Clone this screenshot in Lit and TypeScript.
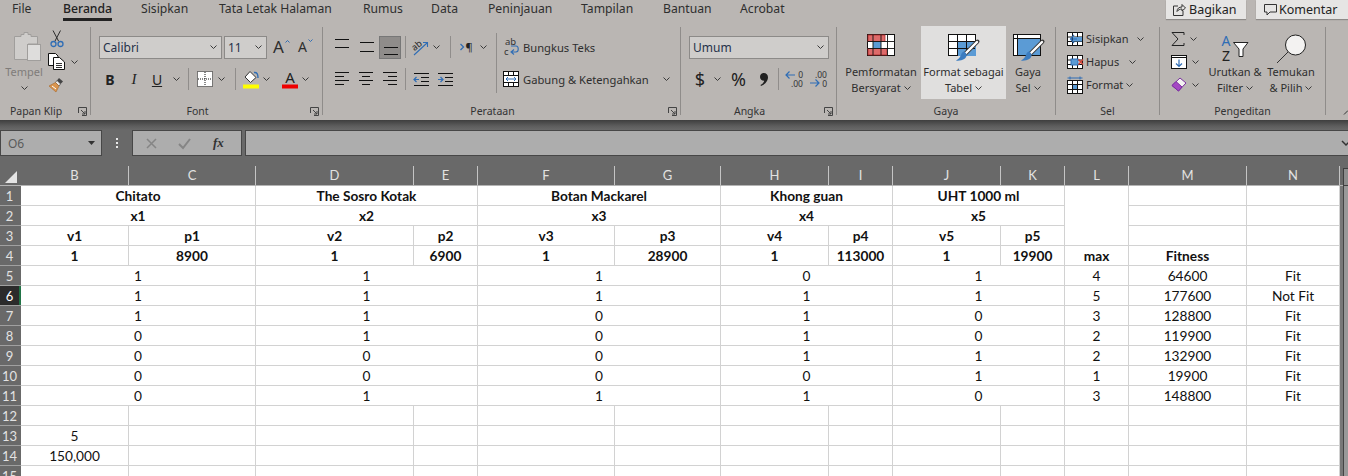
import { LitElement, html, css, svg } from "lit";
import { customElement } from "lit/decorators.js";

const chev = html`<svg class="chev" width="7" height="4" viewBox="0 0 7 4"><path d="M.5.5 3.5 3.5 6.5.5" fill="none" stroke="#3a3a3a" stroke-width="1"/></svg>`;
const launcher = html`<svg class="launcher" width="9" height="9" viewBox="0 0 9 9"><path d="M.5 6V.5H8.500V8.500H4M3 3 7 7M4 7H7V4" fill="none" stroke="#444" stroke-width="1"/></svg>`;

// horizontal line icons for the alignment buttons
const lines = (rows: number[][], w = 15, h = 23) =>
  html`<svg width=${w} height=${h} viewBox="0 0 ${w} ${h}">
    ${rows.map((r) => svg`<path d="M${r[0]} ${r[2] + 0.5}H${r[1]}" stroke="#111" stroke-width="1"/>`)}
  </svg>`;

const LB = "'Noto Sans',sans-serif";

const iconTempel = html`<svg width="28" height="30" viewBox="0 0 28 30">
  <path d="M1.500 5.500H8V3.500H11V1.500H15V3.500H18V5.500H24.500V13H15V28.500H1.500Z" fill="#cfcdcb" stroke="#a09e9c"/>
  <rect x="14.500" y="13.500" width="13" height="16" fill="#dedddc" stroke="#a09e9c"/>
</svg>`;
const iconScissors = html`<svg width="14" height="18" viewBox="0 0 14 18">
  <path d="M3 .5 8.500 11M10.500.5 5 11" fill="none" stroke="#2b2b2b"/>
  <circle cx="3.500" cy="14" r="2.500" fill="none" stroke="#2f6db5" stroke-width="1.300"/>
  <circle cx="10.500" cy="14" r="2.500" fill="none" stroke="#2f6db5" stroke-width="1.300"/>
</svg>`;
const iconCopy = html`<svg width="17" height="17" viewBox="0 0 17 17">
  <path d="M.5.5H7.500L10 3V12.500H.5Z" fill="#fff" stroke="#111"/>
  <path d="M5.500 4.500H11.500L16.500 9V16.500H5.500Z" fill="#fff" stroke="#111"/>
  <path d="M8 10.500H14M8 12.500H14M8 14.500H14" stroke="#333"/>
</svg>`;
const iconBrush = html`<svg width="17" height="16" viewBox="0 0 17 16">
  <path d="M11 1 15 4.500 12.500 7 9 3.500Z" fill="#444"/>
  <path d="M9 3.500 12.500 7 11 9 7.500 5.500Z" fill="#eee" stroke="#333" stroke-width=".6"/>
  <path d="M7.500 5.500 11 9 8 15 1 9Z" fill="#d9954f" stroke="#a8682c" stroke-width=".6"/>
  <path d="M4 9 8 12" stroke="#fff"/>
</svg>`;
const iconBorders = html`<svg width="16" height="16" viewBox="0 0 16 16">
  <rect x=".5" y=".5" width="15" height="15" fill="#fff" stroke="#111" stroke-dasharray="1 1"/>
  <path d="M8 1V15M1 8H15" stroke="#111" stroke-dasharray="1 1"/>
</svg>`;
const iconFill = html`<svg width="17" height="19" viewBox="0 0 17 19">
  <path d="M7 1.500 13 7.500 7.500 12.500 2 7Z" fill="#fff" stroke="#333"/>
  <path d="M11 2.500C14 2 15 4 15 8" fill="none" stroke="#2f6db5" stroke-width="1.400"/>
  <rect y="14.500" width="16" height="4" fill="#ffff00"/>
</svg>`;
const iconFontColor = html`<svg width="17" height="19" viewBox="0 0 17 19">
  <text x="8" y="13" text-anchor="middle" font-size="15" font-family=${LB} fill="#222">A</text>
  <rect y="14.500" width="16" height="4" fill="#f00000"/>
</svg>`;
const iconOrient = html`<svg width="17" height="17" viewBox="0 0 17 17">
  <text x="6" y="9" text-anchor="middle" font-size="9" font-family=${LB} fill="#222" transform="rotate(-40 6 8)">ab</text>
  <path d="M2 16 15 4M11 3.500H15.500V8" fill="none" stroke="#2f6db5" stroke-width="1.100"/>
</svg>`;
const iconIndent = (rev: boolean) => html`<svg width="15" height="13" viewBox="0 0 15 13">
  <path d="M0 .5H15M0 12.500H15M7 4.500H15M7 8.500H15" stroke="#111"/>
  ${rev
    ? svg`<path d="M5 6.500H0M2.500 4 0 6.500 2.500 9" fill="none" stroke="#2f6db5" stroke-width="1.200"/>`
    : svg`<path d="M0 6.500H5M2.500 4 5 6.500 2.500 9" fill="none" stroke="#2f6db5" stroke-width="1.200"/>`}
</svg>`;
const iconRtl = html`<svg width="13" height="12" viewBox="0 0 13 12">
  <path d="M.5 3 3.500 6 .5 9" fill="none" stroke="#2f6db5" stroke-width="1.300"/>
  <text x="9" y="10" text-anchor="middle" font-size="11" font-family=${LB} fill="#222">¶</text>
</svg>`;
const iconWrap = html`<svg width="15" height="20" viewBox="0 0 15 20">
  <text x="1" y="8" font-size="9.500" font-family=${LB} fill="#333">ab</text>
  <text x="0" y="18" font-size="9.500" font-family=${LB} fill="#333">c</text>
  <path d="M8 15H12C15 15 15 9 12 9H7M10 12.500 7 15 10 17.500" fill="none" stroke="#2f6db5" stroke-width="1.100"/>
</svg>`;
const iconMerge = html`<svg width="16" height="16" viewBox="0 0 16 16">
  <rect x=".5" y=".5" width="15" height="15" fill="#fff" stroke="#111"/>
  <path d="M1 4.500H15M1 11.500H15M5.500 1V4M10.500 1V4M5.500 12V15M10.500 12V15" stroke="#111"/>
  <path d="M3 8H13M5 6 3 8 5 10M11 6 13 8 11 10" fill="none" stroke="#2f6db5"/>
</svg>`;
const iconDec = (inc: boolean) => html`<svg width="18" height="18" viewBox="0 0 18 18">
  ${inc
    ? svg`<text x="18" y="8" text-anchor="end" font-size="8.500" font-family=${LB} fill="#333">0</text>
        <text x="18" y="17" text-anchor="end" font-size="8.500" font-family=${LB} fill="#333">.00</text>
        <path d="M10 5H1M4.500 1.500 1 5 4.500 8.500" fill="none" stroke="#2f6db5" stroke-width="1.200"/>`
    : svg`<text x="18" y="8" text-anchor="end" font-size="8.500" font-family=${LB} fill="#333">.00</text>
        <text x="18" y="17" text-anchor="end" font-size="8.500" font-family=${LB} fill="#333">0</text>
        <path d="M1 13H10M6.500 9.500 10 13 6.500 16.500" fill="none" stroke="#2f6db5" stroke-width="1.200"/>`}
</svg>`;
const iconComma = html`<svg width="8" height="13" viewBox="0 0 8 13">
  <path d="M3.800 0C6.300 0 8 1.800 8 4.200 8 8 5 11.500 1 13L.5 12C2.500 10.800 3.800 9.500 4.200 7.800 2 7.900 0 6.300 0 3.900 0 1.700 1.700 0 3.800 0Z" fill="#222"/>
</svg>`;
const iconCond = html`<svg width="28" height="22" viewBox="0 0 28 22">
  <rect x=".5" y=".5" width="27" height="21" fill="#fff" stroke="#111"/>
  <rect x="1" y="1" width="17" height="6.500" fill="#de6a6a" stroke="#b02a2a" stroke-width=".8"/>
  <rect x="6" y="8" width="8" height="6" fill="#5b9bd5"/>
  <rect x="1" y="14.500" width="19" height="6.500" fill="#de6a6a" stroke="#b02a2a" stroke-width=".8"/>
  <path d="M6 1V21M14 1V21M20.500 1V21M1 7.500H27M1 14.500H27" stroke="#111" fill="none" stroke-width=".9"/>
</svg>`;
const brushOver = svg`<path d="M29.500 7.500 17 20" stroke="#3a3a3a" stroke-width="4" stroke-linecap="round"/>
  <path d="M29 8 17 20" stroke="#fff" stroke-width="2.400" stroke-linecap="round"/>
  <path d="M16 17.500C19 19 19.500 22 17 24.500 14 26.500 10 27 8 26.500 11 25 12 23 13 21 13.500 19 15 17.500 16 17.500Z" fill="#3b7cc0"/>`;
const iconTable = html`<svg width="31" height="27" viewBox="0 0 31 27">
  <rect x=".5" y=".5" width="27" height="21" fill="#fff" stroke="#111"/>
  <rect x="10" y="8" width="18" height="14" fill="#5b9bd5"/>
  <path d="M1 7.500H27M1 14.500H27M9.500 1V21M18.500 1V21" stroke="#111" fill="none"/>
  ${brushOver}
</svg>`;
const iconStyle = html`<svg width="31" height="27" viewBox="0 0 31 27">
  <rect x=".5" y=".5" width="27" height="21" fill="#fff" stroke="#111"/>
  <rect x="5" y="5" width="22" height="16" fill="#5b9bd5"/>
  <path d="M1 4.500H27M4.500 1V21" stroke="#111" fill="none"/>
  ${brushOver}
</svg>`;
const cellBase = svg`<rect x=".5" y=".5" width="15" height="13" fill="#fff" stroke="#111"/>
  <path d="M1 5H15M1 9.500H15M5.500 1V13M10.500 1V13" stroke="#111" fill="none"/>`;
const iconInsert = html`<svg width="16" height="14" viewBox="0 0 16 14">
  ${cellBase}<rect x="6" y="5" width="9" height="4.500" fill="#5b9bd5"/>
  <path d="M7 3 3.500 7 7 11M3.500 7H10" fill="none" stroke="#2f6db5" stroke-width="1.200"/>
</svg>`;
const iconDelete = html`<svg width="17" height="14" viewBox="0 0 17 14">
  ${cellBase}<rect x="4" y="4" width="7" height="6" fill="#5b9bd5" stroke="#2f6db5"/>
  <path d="M11.500 4.500 16 9.500M16 4.500 11.500 9.500" stroke="#d04437" stroke-width="1.500"/>
</svg>`;
const iconFormat = html`<svg width="16" height="18" viewBox="0 0 16 18">
  <path d="M.5 2H15.500M3 .5V3.500M13 .5V3.500" stroke="#2f6db5"/>
  <rect x=".5" y="4.500" width="15" height="13" fill="#fff" stroke="#111"/>
  <rect x="5.500" y="8.500" width="5" height="5" fill="#5b9bd5"/>
  <path d="M1 8.500H15M1 13.500H15M5.500 5V17M10.500 5V17" stroke="#111" fill="none"/>
</svg>`;
const iconSum = html`<svg width="14" height="14" viewBox="0 0 14 14"><path d="M13 3V.5H1L7 7 1 13.500H13V11" fill="none" stroke="#222"/></svg>`;
const iconDown = html`<svg width="16" height="14" viewBox="0 0 16 14">
  <rect x=".5" y=".5" width="15" height="13" fill="#fff" stroke="#111"/>
  <path d="M1 2.500H15" stroke="#111"/>
  <path d="M8 4.500V11M5 8.500 8 11.500 11 8.500" fill="none" stroke="#2f6db5" stroke-width="1.200"/>
</svg>`;
const iconEraser = html`<svg width="16" height="15" viewBox="0 0 16 15">
  <path d="M1 8.500 9 1 15 6 7.500 14Z" fill="#f3f2f1" stroke="#7b2fa0"/>
  <path d="M1 8.500 5 4.500 11 10 7.500 14Z" fill="#a548c4" stroke="#7b2fa0"/>
</svg>`;
const iconSort = html`<svg width="30" height="28" viewBox="0 0 30 28">
  <text x="6" y="12" text-anchor="middle" font-size="14" font-family=${LB} fill="#2f6db5">A</text>
  <text x="6" y="27" text-anchor="middle" font-size="14" font-family=${LB} fill="#222">Z</text>
  <path d="M13.500 8.500H28L23 15V22.500H19V15Z" fill="#fff" stroke="#222"/>
</svg>`;
const iconFind = html`<svg width="30" height="30" viewBox="0 0 30 30">
  <circle cx="19.500" cy="11" r="10" fill="#f3f2f1" stroke="#222"/>
  <path d="M12 18 1 29" stroke="#333"/>
</svg>`;
const iconShare = html`<svg width="13" height="13" viewBox="0 0 13 13">
  <path d="M5 3H.5V12.500H10V8M4 8.500C4 5.500 6 4 9 4V1.500L12.500 5 9 8V6C7 6 5 7 4 8.500Z" fill="none" stroke="#333"/>
</svg>`;
const iconComment = html`<svg width="13" height="13" viewBox="0 0 13 13">
  <path d="M.5 1.500H12.500V9H6L3 12V9H.5Z" fill="none" stroke="#333"/>
</svg>`;

const TABS = ["File", "Beranda", "Sisipkan", "Tata Letak Halaman", "Rumus", "Data", "Peninjauan", "Tampilan", "Bantuan", "Acrobat"];
// x position of every tab label in the reference
const TAB_X = [12, 63, 141, 219, 363, 431, 488, 581, 663, 740];

const COLS: [string, number][] = [
  ["B", 108], ["C", 127], ["D", 158], ["E", 64], ["F", 137], ["G", 106], ["H", 108],
  ["I", 64], ["J", 108], ["K", 64], ["L", 64], ["M", 118], ["N", 93],
];

const PRODUCTS = ["Chitato", "The Sosro Kotak", "Botan Mackarel", "Khong guan", "UHT 1000 ml"];
const PRICES = ["8900", "6900", "28900", "113000", "19900"];
const DATA: [number[], string, string, string][] = [
  [[1, 1, 1, 0, 1], "4", "64600", "Fit"],
  [[1, 1, 1, 1, 1], "5", "177600", "Not Fit"],
  [[1, 1, 0, 1, 0], "3", "128800", "Fit"],
  [[0, 1, 0, 1, 0], "2", "119900", "Fit"],
  [[0, 0, 0, 1, 1], "2", "132900", "Fit"],
  [[0, 0, 0, 0, 1], "1", "19900", "Fit"],
  [[0, 1, 1, 1, 0], "3", "148800", "Fit"],
];

@customElement("app-root")
export class AppRoot extends LitElement {
  static styles = css`
    :host {
      display: block;
      width: 1348px;
      height: 476px;
      overflow: hidden;
      background: #696969;
      font-family: "Noto Sans", sans-serif;
      font-size: 11px;
      color: #2e2e2e;
    }
    svg { display: block; flex: none; overflow: visible; }
    .ribbon { height: 120px; background: #bab6b3; }
    .tabs { height: 20px; display: flex; font-size: 12.200px; position: relative; }
    .tab { position: absolute; top: 0; height: 18px; line-height: 17px; white-space: nowrap; }
    .tab.on { border-bottom: 3px solid #222; font-weight: 500; color: #222; }
    .share { margin-left: auto; display: flex; gap: 10px; }
    .share div {
      height: 19px; display: flex; align-items: center; background: #e6e5e4; box-shadow: 0 1px 1px #8d8a88;
      font-size: 12.500px; color: #222; box-sizing: border-box; white-space: nowrap;
    }
    .share .b { width: 80px; padding-left: 7px; gap: 3px; }
    .share .k { width: 92px; padding-left: 8px; gap: 2px; }
    .groups { display: flex; padding-top: 7px; }
    .group { height: 88px; box-sizing: border-box; border-right: 1px solid #8f8c8a; flex: none; display: flex; flex-direction: column; }
    .body { height: 77px; flex: none; display: flex; }
    .foot { display: flex; align-items: center; height: 14px; flex: none; line-height: 14px; color: #333; font-size: 10.500px; }
    .foot span { flex: 1; text-align: center; padding-right: 6px; }
    .foot.plain span { padding-right: 0; }
    .launcher { margin-right: 3px; }
    .g1 { width: 91px; } .g2 { width: 232px; } .g3 { width: 358px; } .g4 { width: 156px; }
    .g5 { width: 219px; } .g6 { width: 104px; } .g7 { width: 166px; }
    .tail { flex: 1; display: flex; justify-content: flex-end; align-items: flex-end; height: 88px; }

    /* clipboard */
    .paste { width: 48px; flex: none; display: flex; flex-direction: column; align-items: center; padding-top: 4px; color: #7f7c7a; font-size: 11px; }
    .paste svg:first-child { margin-left: 5px; }
    .paste span { margin-top: 3px; line-height: 16px; }
    .paste .chev { margin-top: 6px; }
    .clip { display: flex; flex-direction: column; }
    .clip div { height: 23px; display: flex; align-items: center; gap: 2px; }
    .clip .first { padding-left: 2px; }

    /* font */
    .stack { display: flex; flex-direction: column; gap: 8px; padding: 8px 0 0 8px; }
    .row { display: flex; align-items: center; height: 24px; }
    .select {
      height: 23px; box-sizing: border-box; background: #cfcdcb; border: 1px solid #8c8a88;
      display: flex; align-items: center; justify-content: space-between; padding: 0 4px 0 3px;
      font-size: 12px; color: #26324a; flex: none;
    }
    .font-name { width: 123px; }
    .font-size { width: 43px; margin-left: 2px; }
    .num-format { width: 140px; }
    .grow-a { display: flex; align-items: flex-start; margin-left: 6px; width: 25px; font-size: 17px; line-height: 20px; }
    .grow-b { display: flex; align-items: flex-start; font-size: 14px; line-height: 22px; }
    .caret { margin-top: 3px; margin-left: 1px; }
    .vsep { width: 1px; height: 22px; background: #908d8b; flex: none; }
    .fmt { width: 24px; text-align: center; flex: none; font-size: 14px; color: #222; }
    .fmt.b { font-weight: 700; margin-left: -1px; }
    .fmt.i { font-style: italic; font-family: "Liberation Serif", serif; font-size: 15px; }
    .fmt.u { text-decoration: underline; margin-left: -1px; }
    .c14 { width: 14px; display: flex; justify-content: center; flex: none; }
    .m3 { margin: 0 3px; }
    .m3.after-u { margin-left: 5px; }
    .c-border { width: 21px; display: flex; justify-content: flex-end; margin-right: 5px; flex: none; }
    .m3.after-border { margin-left: 10px; }
    .c-icon { width: 24px; display: flex; justify-content: center; flex: none; }
    .c-color { margin-left: 8px; }

    /* alignment */
    .align { width: 173px; padding: 8px 0 0 7px; box-sizing: border-box; display: flex; flex-direction: column; gap: 8px; flex: none; }
    .al { width: 24px; height: 23px; display: flex; align-items: center; justify-content: center; flex: none; }
    .al.on i { width: 22px; height: 23px; display: flex; align-items: center; justify-content: center; background: #8f8c8a; box-shadow: inset 0 0 0 1px #777; }
    .orient { display: flex; align-items: center; gap: 4px; margin-left: 3px; width: 34px; flex: none; }
    .rtl-sep { margin-left: 4px; }
    .rtl { display: flex; align-items: center; gap: 7px; margin-left: 9px; }
    .indents { display: flex; }
    .wrap { flex: 1; display: flex; flex-direction: column; gap: 8px; padding-top: 8px; }
    .wrap-row { height: 24px; display: flex; align-items: center; gap: 4px; padding-left: 3px; font-size: 11.200px; white-space: nowrap; }
    .wrap-row .ic { width: 19px; display: flex; justify-content: flex-end; }
    .wrap-row .chev { margin-left: 10px; }
    .wrap-sep { width: 1px; height: 60px; background: #908d8b; margin-top: 6px; flex: none; }

    /* number */
    .sym { font-size: 18px; width: 20px; text-align: center; flex: none; color: #222; }
    .pct { width: 29px; font-size: 18px; }
    .comma { width: 22px; display: flex; justify-content: center; }
    .num-row { margin-left: 1px; }

    /* styles */
    .bigs { display: flex; padding-left: 4px; }
    .big {
      flex: none; height: 73px; margin-top: -1px; padding-top: 8px; box-sizing: border-box;
      display: flex; flex-direction: column; align-items: center; text-align: center; line-height: 16px;
      white-space: nowrap;
    }
    .big .pic { height: 30px; flex: none; }
    .big div.tx { display: flex; align-items: center; justify-content: center; gap: 3px; }
    .big.w80 { width: 80px; }
    .big.w85 { width: 85px; background: #e0dfde; }
    .big.w44 { width: 44px; }
    .big.w56 { width: 56px; }

    /* cells */
    .cells { display: flex; flex-direction: column; padding-left: 11px; }
    .cell-row { height: 23px; display: flex; align-items: center; gap: 3px; white-space: nowrap; }
    .cell-row .ic { width: 16px; flex: none; }
    .m-ins { margin-left: 5px; } .m-del { margin-left: 7px; } .m-fmt { margin-left: 0; }
    .edit-col { width: 47px; flex: none; padding-left: 11px; box-sizing: border-box; display: flex; flex-direction: column; }
    .edit-col div { height: 23px; display: flex; align-items: center; gap: 5px; }

    /* formula bar */
    .fbar {
      height: 46px; box-sizing: border-box; padding-top: 10px; display: flex; align-items: flex-start;
      background: linear-gradient(#3e3e3e 0, #5d5d5d 6px, #696969 10px);
    }
    .fbox { height: 26px; box-sizing: border-box; background: #adadad; border: 1px solid #474747; display: flex; align-items: center; flex: none; }
    .namebox { width: 102px; padding: 0 6px 0 7px; justify-content: space-between; color: #5a5a5a; font-size: 12px; }
    .dots { width: 30px; display: flex; justify-content: center; align-items: center; height: 26px; flex: none; }
    .fbtns { width: 110px; padding-left: 13px; gap: 21px; }
    .fx { font-family: "Liberation Serif", serif; font-style: italic; font-weight: 700; font-size: 13px; color: #333; margin-left: 1px; }
    .finput { flex: 1; margin-left: 3px; justify-content: flex-end; border-right: 0; padding-right: 0; }

    /* sheet */
    .heads { display: flex; height: 20px; background: #696969; box-sizing: border-box; border-bottom: 1px solid #b4b4b4; }
    .corner { width: 21px; flex: none; box-sizing: border-box; padding: 5px 0 0 5px; }
    .chead {
      flex: none; box-sizing: border-box; border-right: 1px solid #c4c4c4; text-align: center;
      font-family: Lato, sans-serif; font-size: 13px; line-height: 19px; color: #e2e2e2;
    }
    .sbar-top { flex: 1; display: flex; justify-content: flex-end; padding-top: 2px; }
    .sbar-top i { width: 5px; height: 18px; box-sizing: border-box; border: 1px solid #3f3f3f; border-right: 0; background: #8d8d8d; }
    .sheet { display: flex; height: 290px; }
    .rheads { width: 21px; flex: none; }
    .rhead {
      height: 20px; box-sizing: border-box; border-bottom: 1px solid #a0a0a0; padding-right: 2px; text-align: center;
      font-family: Lato, sans-serif; font-size: 13px; line-height: 20px; color: #e2e2e2;
    }
    .rhead.sel { background: #2b2b2b; color: #fff; box-shadow: inset -2px 0 0 #217346; }
    .grid {
      flex: none; background: #fff; display: grid;
      grid-template-rows: repeat(15, 20px);
      font-family: Lato, sans-serif; font-size: 13.700px; color: #111;
    }
    .c {
      box-sizing: border-box; border-right: 1px solid #d2d2d2; border-bottom: 1px solid #d2d2d2;
      text-align: center; line-height: 20px; white-space: nowrap; min-width: 0;
    }
    .c.bold { font-weight: 700; }
    .span2 { grid-column: span 2; }
    .tall { grid-row: span 3; }
    .sbar { flex: 1; display: flex; }
    .sbar i:first-child { width: 3px; background: #787878; }
    .sbar i:nth-child(2) { width: 1px; background: #444; }
    .sbar i:last-child { flex: 1; background: #999; }
  `;

  private cells() {
    const out = [];
    for (const p of PRODUCTS) out.push(html`<div class="c bold span2">${p}</div>`);
    out.push(html`<div class="c tall"></div><div class="c"></div><div class="c"></div>`);
    PRODUCTS.forEach((_, i) => out.push(html`<div class="c bold span2">x${i + 1}</div>`));
    out.push(html`<div class="c"></div><div class="c"></div>`);
    PRODUCTS.forEach((_, i) => out.push(html`<div class="c bold">v${i + 1}</div><div class="c bold">p${i + 1}</div>`));
    out.push(html`<div class="c"></div><div class="c"></div>`);
    PRICES.forEach((p) => out.push(html`<div class="c bold">1</div><div class="c bold">${p}</div>`));
    out.push(html`<div class="c bold">max</div><div class="c bold">Fitness</div><div class="c"></div>`);
    for (const [vals, max, fit, label] of DATA) {
      for (const v of vals) out.push(html`<div class="c span2">${v}</div>`);
      out.push(html`<div class="c">${max}</div><div class="c">${fit}</div><div class="c">${label}</div>`);
    }
    const extra: Record<number, string> = { 13: "5", 14: "150,000" };
    for (let r = 12; r <= 15; r++) {
      COLS.forEach((_, i) => out.push(html`<div class="c">${i === 0 ? extra[r] ?? "" : ""}</div>`));
    }
    return out;
  }

  private renderRibbon() {
    const top = [[0, 14, 3], [0, 14, 11]];
    const mid = [[1, 15, 6], [1, 15, 15]];
    const bot = [[1, 15, 11], [1, 15, 18]];
    const left = [[0, 14, 4], [0, 9, 8], [0, 14, 12], [0, 9, 16]];
    const center = [[0, 14, 4], [3, 11, 8], [0, 14, 12], [3, 11, 16]];
    const right = [[0, 14, 4], [5, 14, 8], [0, 14, 12], [5, 14, 16]];
    return html`
      <div class="ribbon">
        <div class="tabs">
          ${TABS.map(
            (t, i) => html`<div class="tab ${i === 1 ? "on" : ""}" style="left:${TAB_X[i]}px">${t}</div>`
          )}
          <div class="share">
            <div class="b">${iconShare}Bagikan</div>
            <div class="k">${iconComment}Komentar</div>
          </div>
        </div>
        <div class="groups">
          <div class="group g1">
            <div class="body">
              <div class="paste">${iconTempel}<span>Tempel</span>${chev}</div>
              <div class="clip">
                <div class="first">${iconScissors}</div>
                <div>${iconCopy}<span class="c14">${chev}</span></div>
                <div>${iconBrush}</div>
              </div>
            </div>
            <div class="foot"><span>Papan Klip</span>${launcher}</div>
          </div>

          <div class="group g2">
            <div class="body">
              <div class="stack">
                <div class="row">
                  <div class="select font-name"><span>Calibri</span>${chev}</div>
                  <div class="select font-size"><span>11</span>${chev}</div>
                  <div class="grow-a">A<svg class="caret" width="5" height="3" viewBox="0 0 5 3"><path d="M.5 2.500 2.500.5 4.500 2.500" fill="none" stroke="#2f6db5"/></svg></div>
                  <div class="grow-b">A<svg class="caret" width="5" height="3" viewBox="0 0 5 3"><path d="M.5.5 2.500 2.500 4.500.5" fill="none" stroke="#2f6db5"/></svg></div>
                </div>
                <div class="row">
                  <div class="fmt b">B</div>
                  <div class="fmt i">I</div>
                  <div class="fmt u">U</div>
                  <span class="c14">${chev}</span>
                  <div class="vsep m3 after-u"></div>
                  <div class="c-border">${iconBorders}</div>
                  ${chev}
                  <div class="vsep m3 after-border"></div>
                  <div class="c-icon">${iconFill}</div>
                  ${chev}
                  <div class="c-icon c-color">${iconFontColor}</div>
                  ${chev}
                </div>
              </div>
            </div>
            <div class="foot"><span>Font</span>${launcher}</div>
          </div>

          <div class="group g3">
            <div class="body">
              <div class="align">
                <div class="row">
                  <div class="al">${lines(top)}</div>
                  <div class="al">${lines(mid)}</div>
                  <div class="al on"><i>${lines(bot)}</i></div>
                  <div class="vsep m3"></div>
                  <div class="orient">${iconOrient}${chev}</div>
                  <div class="vsep rtl-sep"></div>
                  <div class="rtl">${iconRtl}${chev}</div>
                </div>
                <div class="row">
                  <div class="al">${lines(left)}</div>
                  <div class="al">${lines(center)}</div>
                  <div class="al">${lines(right)}</div>
                  <div class="vsep m3"></div>
                  <div class="indents">
                    <div class="al">${iconIndent(true)}</div>
                    <div class="al">${iconIndent(false)}</div>
                  </div>
                </div>
              </div>
              <div class="wrap-sep"></div>
              <div class="wrap">
                <div class="wrap-row"><span class="ic">${iconWrap}</span>Bungkus Teks</div>
                <div class="wrap-row"><span class="ic">${iconMerge}</span>Gabung &amp; Ketengahkan${chev}</div>
              </div>
            </div>
            <div class="foot"><span>Perataan</span>${launcher}</div>
          </div>

          <div class="group g4">
            <div class="body">
              <div class="stack">
                <div class="row"><div class="select num-format"><span>Umum</span>${chev}</div></div>
                <div class="row num-row">
                  <div class="sym">$</div>
                  <span class="c14">${chev}</span>
                  <div class="sym pct">%</div>
                  <div class="comma">${iconComma}</div>
                  <div class="vsep m3"></div>
                  <div class="c-icon">${iconDec(true)}</div>
                  <div class="c-icon">${iconDec(false)}</div>
                </div>
              </div>
            </div>
            <div class="foot"><span>Angka</span>${launcher}</div>
          </div>

          <div class="group g5">
            <div class="body bigs">
              <div class="big w80">
                <div class="pic">${iconCond}</div>
                <div class="tx">Pemformatan</div>
                <div class="tx">Bersyarat ${chev}</div>
              </div>
              <div class="big w85">
                <div class="pic">${iconTable}</div>
                <div class="tx">Format sebagai</div>
                <div class="tx">Tabel ${chev}</div>
              </div>
              <div class="big w44">
                <div class="pic">${iconStyle}</div>
                <div class="tx">Gaya</div>
                <div class="tx">Sel ${chev}</div>
              </div>
            </div>
            <div class="foot plain"><span>Gaya</span></div>
          </div>

          <div class="group g6">
            <div class="body cells">
              <div class="cell-row"><span class="ic">${iconInsert}</span>Sisipkan<span class="m-ins">${chev}</span></div>
              <div class="cell-row"><span class="ic">${iconDelete}</span>Hapus<span class="m-del">${chev}</span></div>
              <div class="cell-row"><span class="ic">${iconFormat}</span>Format<span class="m-fmt">${chev}</span></div>
            </div>
            <div class="foot plain"><span>Sel</span></div>
          </div>

          <div class="group g7">
            <div class="body">
              <div class="edit-col">
                <div>${iconSum}${chev}</div>
                <div>${iconDown}${chev}</div>
                <div>${iconEraser}${chev}</div>
              </div>
              <div class="big w56">
                <div class="pic">${iconSort}</div>
                <div class="tx">Urutkan &amp;</div>
                <div class="tx">Filter ${chev}</div>
              </div>
              <div class="big w56">
                <div class="pic">${iconFind}</div>
                <div class="tx">Temukan</div>
                <div class="tx">&amp; Pilih ${chev}</div>
              </div>
            </div>
            <div class="foot plain"><span>Pengeditan</span></div>
          </div>

          <div class="tail">
            <svg width="13" height="6" viewBox="0 0 13 6"><path d="M9 5.500 13 1.500" fill="none" stroke="#333"/></svg>
          </div>
        </div>
      </div>
    `;
  }

  render() {
    const gridCols = COLS.map(([, w]) => `${w}px`).join(" ");
    return html`
      ${this.renderRibbon()}
      <div class="fbar">
        <div class="fbox namebox">
          <span>O6</span>
          <svg width="7" height="4" viewBox="0 0 7 4"><path d="M0 0H7L3.500 4Z" fill="#333"/></svg>
        </div>
        <div class="dots">
          <svg width="3" height="11" viewBox="0 0 3 11"><path d="M0 0H2V2H0ZM0 4H2V6H0ZM0 8H2V10H0Z" fill="#e8e8e8"/></svg>
        </div>
        <div class="fbox fbtns">
          <svg width="11" height="11" viewBox="0 0 11 11"><path d="M1 1 10 10M10 1 1 10" stroke="#858585" stroke-width="1.500"/></svg>
          <svg width="13" height="11" viewBox="0 0 13 11"><path d="M1 6 5 10 12 1" fill="none" stroke="#858585" stroke-width="2"/></svg>
          <span class="fx">fx</span>
        </div>
        <div class="fbox finput">
          <svg width="6" height="6" viewBox="0 0 6 6"><path d="M0 1 4 5 8 1" fill="none" stroke="#333" stroke-width="1.500"/></svg>
        </div>
      </div>
      <div class="heads">
        <div class="corner">
          <svg width="12" height="12" viewBox="0 0 12 12"><path d="M12 0V12H0Z" fill="#e4e4e4"/></svg>
        </div>
        ${COLS.map(([n, w]) => html`<div class="chead" style="width:${w}px">${n}</div>`)}
        <div class="sbar-top"><i></i></div>
      </div>
      <div class="sheet">
        <div class="rheads">
          ${Array.from({ length: 15 }, (_, i) => html`<div class="rhead ${i === 5 ? "sel" : ""}">${i + 1}</div>`)}
        </div>
        <div class="grid" style="grid-template-columns:${gridCols}">${this.cells()}</div>
        <div class="sbar"><i></i><i></i><i></i></div>
      </div>
    `;
  }
}
